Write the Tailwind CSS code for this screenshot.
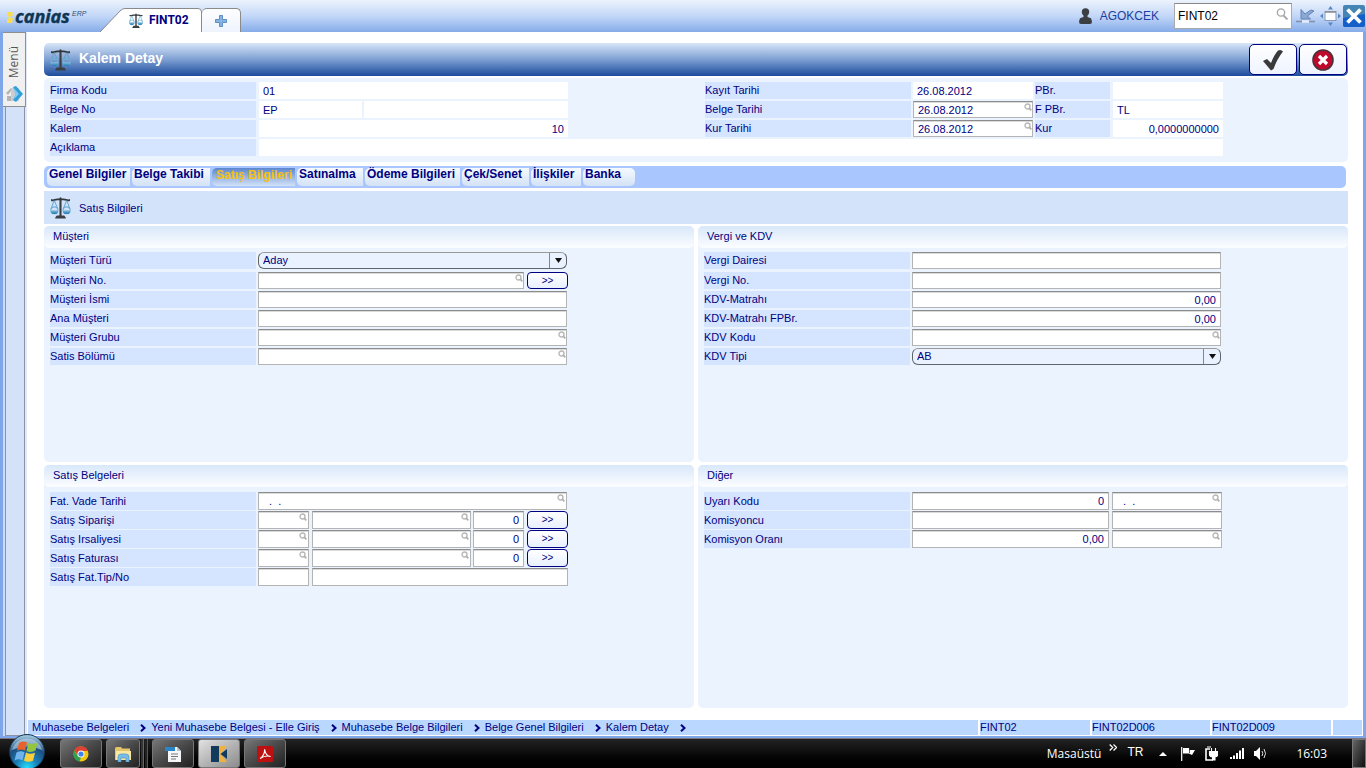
<!DOCTYPE html>
<html lang="tr">
<head>
<meta charset="utf-8">
<title>FINT02 - Kalem Detay</title>
<script src="https://cdn.jsdelivr.net/npm/@tailwindcss/browser@4"></script>
</head>
<body class="flex min-h-screen flex-col bg-[#7fa6e8] font-['Liberation_Sans',Arial,sans-serif] text-[11px] leading-4 text-[#000080]">

<svg class="absolute size-0" aria-hidden="true">
  <defs>
    <linearGradient id="pan" x1="0" y1="0" x2="0" y2="1"><stop offset="0" stop-color="#8fc4e4"/><stop offset="1" stop-color="#1c78ae"/></linearGradient>
    <radialGradient id="orbBg" cx=".5" cy=".95" r=".9"><stop offset="0" stop-color="#25e0ff"/><stop offset=".35" stop-color="#1b7fb8"/><stop offset=".7" stop-color="#1d4f80"/><stop offset="1" stop-color="#9cc3dc"/></radialGradient>
    <symbol id="scales" viewBox="0 0 20 21">
      <path d="M9 1.500a1.200 1.200 0 0 1 2 0V18h2.500l1.500 2v1H5v-1l1.500-2H9z" fill="#3a3f44"/>
      <path d="M1 2.500c2 1 3.500-.5 6-.5h6c2.500 0 4 1.500 6 .5v1.800c-2 .8-4-.6-6-.6H7c-2 0-4 1.400-6 .6z" fill="#33383c"/>
      <path d="M3.800 4 1 12M4.200 4 7.500 12M15.800 4 12.500 12M16.200 4 19 12" stroke="#5aa2cc" stroke-width=".9" fill="none"/>
      <circle cx="4.200" cy="13.200" r="3.300" fill="none" stroke="#6fb0d6" stroke-width="1"/>
      <circle cx="15.800" cy="13.200" r="3.300" fill="none" stroke="#6fb0d6" stroke-width="1"/>
      <path d="M.5 13h7.400a3.700 3.700 0 0 1-7.400 0zM12.100 13h7.400a3.700 3.700 0 0 1-7.400 0z" fill="url(#pan)"/>
    </symbol>
    <symbol id="mag" viewBox="0 0 8 8">
      <circle cx="3.500" cy="3.500" r="2.500" fill="none" stroke="#b8b8b8" stroke-width="1.400"/>
      <path d="M5.200 5.200 7.300 7.300" stroke="#b0b0b0" stroke-width="1.800"/>
    </symbol>
    <symbol id="crumb" viewBox="0 0 6 8"><path d="M1 .8 4.500 4 1 7.200" fill="none" stroke="#000080" stroke-width="2"/></symbol>
  </defs>
</svg>

<header class="flex h-8 items-start justify-between bg-linear-to-b from-[#edf3fd] via-[#c3d7f8] to-[#86ace9]">
  <div class="flex items-end">
    <a href="#" aria-label="canias ERP" class="flex h-8 w-[100px] items-center pl-[7px]">
      <svg viewBox="0 0 80 22" class="h-[22px] w-20">
        <path d="M0 7h5.500v4H3.500v2H6L5 18H0v-4h1.500v-3H0z" fill="#fcdc4a"/>
        <text x="8" y="18" font-family="Open Sans, sans-serif" font-size="18" font-weight="700" font-style="italic" fill="#0f3552" stroke="#0f3552" stroke-width=".4">canias</text>
        <text x="65" y="11" font-family="Liberation Sans, sans-serif" font-size="7" font-style="italic" fill="#2f4f70">ERP</text>
      </svg>
    </a>
    <nav class="flex h-8 items-end">
      <a href="#" class="relative flex h-6 w-[102px] items-center gap-[5px] pl-7 font-['Roboto',sans-serif] text-[12px] font-bold">
        <svg class="absolute inset-0 h-6 w-[102px]" viewBox="0 0 102 24"><path d="M0 24 20 3Q22.500.5 25 .5H98Q101.500.5 101.500 4V24" fill="#fff" stroke="#8a8a8a"/></svg>
        <svg class="relative h-[15px] w-4"><use href="#scales"/></svg>
        <span class="relative">FINT02</span>
      </a>
      <button aria-label="Yeni sekme" class="flex h-6 w-[39px] items-center justify-center rounded-t-[5px] border border-b-0 border-l-0 border-[#8a8a8a] bg-linear-to-b from-[#fdfeff] to-[#eef4fe]">
        <svg class="size-3" viewBox="0 0 12 12"><path d="M4.500.5h3v4h4v3h-4v4h-3v-4h-4v-3h4z" fill="#86b3e0" stroke="#5b8fc6"/></svg>
      </button>
    </nav>
  </div>
  <div class="flex items-center pt-[3px] pr-px text-[12px]">
    <svg class="mr-2 h-4 w-[13px]" viewBox="0 0 13 16"><circle cx="6.500" cy="4" r="3.700" fill="#3b3f44"/><path d="M4.500 6h4v3l3.500 1.200 1 3.300q0 2.500-2 2.500H2q-2 0-2-2.500l1-3.300L4.500 9z" fill="#3b3f44"/></svg>
    <span class="mr-[15px] text-[#1c3fa0]">AGOKCEK</span>
    <span class="relative mr-1 flex">
      <input aria-label="Program" value="FINT02" class="h-[26px] w-[118px] border border-[#aaa] border-t-[#888] bg-white px-[3px] text-black">
      <svg class="absolute top-[5px] right-1 size-3" viewBox="0 0 12 12"><circle cx="5" cy="4.500" r="3.700" fill="none" stroke="#a5a5a5" stroke-width="1.300"/><path d="m7.500 7.500 4 4" stroke="#a5a5a5" stroke-width="1.800"/></svg>
    </span>
    <button aria-label="Küçült" class="mr-1 flex"><svg class="h-5 w-5" viewBox="0 0 20 20"><path d="M0 15.500h19" stroke="#7f93ae" stroke-width="1.600"/><path d="M6 15.500h7" stroke="#e8eef8" stroke-width="2.500"/><path d="M5 3.500V13h9.500l-3-3L18 5l-3-1-6 4z" fill="#8aa8d4" stroke="#6684b4"/></svg></button>
    <button aria-label="Tam ekran" class="mr-[2px] flex"><svg class="h-5 w-[21px]" viewBox="0 0 21 20"><path d="M10.500 0 13 3.500H8zM10.500 20 13 16.500H8zM0 10l3-2.500v5zM21 10l-3-2.500v5z" fill="#5c86c0"/><rect x="5" y="5.500" width="11" height="9" fill="#fafcff" stroke="#8899b4"/><path d="M5 6h11" stroke="#8c8c8c" stroke-width="1.500"/></svg></button>
    <button aria-label="Kapat" class="flex"><svg class="h-[22px] w-[22px]" viewBox="0 0 22 22"><rect width="22" height="22" rx="2" fill="#4585b4"/><path d="M0 13 22 9v11q0 2-2 2H2q-2 0-2-2z" fill="#1460c8"/><path d="m4.500 4.500 13 13M17.500 4.500l-13 13" stroke="#fff" stroke-width="3.800"/></svg></button>
  </div>
</header>

<div class="mr-[3px] mb-0.5 ml-[3px] flex flex-1 bg-white">
  <aside class="flex w-[24px] flex-col border-r-2 border-[#dfe9fa] bg-[#c9dcf8]">
    <button class="flex h-[75px] w-[23px] flex-col items-center justify-between border border-l-0 border-[#8f8f8f] bg-[#f0f0f0] pt-[13px] pb-1 font-['Open_Sans',sans-serif] text-[12px] text-[#555]">
      <span class="rotate-180 [writing-mode:vertical-rl]">Menü</span>
      <svg class="h-4 w-[17px]" viewBox="0 0 17 16"><path d="M0 7 5 2v3L2 9zM1 10h4v5H1z" fill="#b4b4b4"/><path d="M5 2h8v13H5z" fill="#c9ced3"/><path d="m7 1 3-1 7 8-7 8-3-2 3-6z" fill="#2f9fdc"/><path d="m7 1 3 7-3 6 6-6z" fill="#82cdf3"/></svg>
    </button>
    <div class="ml-0.5 w-5 flex-1 border border-t-0 border-[#8b93a5] bg-[#d3e2f9]"></div>
  </aside>

  <div class="flex min-w-0 flex-1 flex-col">
    <main class="ml-[17px] mr-[15px] flex flex-1 flex-col pt-[11px] [&_label]:h-[17px] [&_label]:w-[206px] [&_label]:shrink-0 [&_label]:bg-[#d5e5ff] [&_input]:h-[17px] [&_input]:w-full [&_input]:min-w-0 [&_input]:bg-white [&_input]:px-1">

      <div class="flex h-[33px] items-center rounded-[5px] bg-linear-to-b from-[#d8e6f8] via-[#7d9fd2] to-[#1c4c9c] pr-px pl-1.5">
        <svg class="h-[23px] w-[21px]"><use href="#scales"/></svg>
        <h1 class="ml-2 flex-1 pb-1 text-[14px] font-bold text-white">Kalem Detay</h1>
        <div class="flex gap-0.5">
          <button aria-label="Onayla" class="flex h-[31px] w-12 items-center justify-center rounded-[5px] border border-[#000080] bg-linear-to-b from-white to-[#edf3ff]"><svg class="h-[22px] w-[22px]" viewBox="0 0 22 22"><path d="M1 12 5 10l4 4Q12 6 16 1.500q3-1.500 5 1Q15 10 11.500 20L9 21.500z" fill="#3a3a3a"/></svg></button>
          <button aria-label="Vazgeç" class="flex h-[31px] w-12 items-center justify-center rounded-[5px] border border-[#000080] bg-linear-to-b from-white to-[#edf3ff]"><svg class="h-[22px] w-[22px]" viewBox="0 0 22 22"><circle cx="11" cy="11" r="10" fill="#c00a2c" stroke="#4a3038" stroke-width="1.600"/><path d="m7 7 8 8M15 7l-8 8" stroke="#fff" stroke-width="3.200"/></svg></button>
        </div>
      </div>

      <section class="mt-0.5 flex flex-col gap-0.5 rounded-[5px] bg-[#ebf3ff] px-1.5 pt-1 pb-1.5">
        <div class="flex">
          <div class="flex w-[655px] flex-col gap-0.5">
            <div class="flex"><label for="firma">Firma Kodu</label><div class="ml-[3px] flex w-[309px]"><input id="firma" value="01" readonly></div></div>
            <div class="flex"><label for="belge">Belge No</label><div class="ml-[3px] flex w-[309px] gap-0.5"><div class="w-[103px]"><input id="belge" value="EP" readonly></div><div class="flex flex-1"><input aria-label="Belge numarası" readonly></div></div></div>
            <div class="flex"><label for="kalem">Kalem</label><div class="ml-[3px] flex w-[309px]"><input id="kalem" value="10" readonly class="text-right"></div></div>
          </div>
          <div class="grid grid-cols-[206px_120px_75px_111px] gap-0.5">
            <label for="kayit">Kayıt Tarihi</label><input id="kayit" value="26.08.2012" readonly>
            <label for="pbr" class="max-w-[75px]">PBr.</label><div class="ml-px"><input id="pbr" readonly></div>
            <label for="btarih">Belge Tarihi</label>
            <span class="relative flex"><input id="btarih" value="26.08.2012" class="border border-[#b4b4b4] border-t-[#8c8c8c] inset-shadow-[0_1px_#dadada]"><svg class="absolute top-0.5 right-px size-2"><use href="#mag"/></svg></span>
            <label for="fpbr" class="max-w-[75px]">F PBr.</label><div class="ml-px"><input id="fpbr" value="TL" readonly></div>
            <label for="ktarih">Kur Tarihi</label>
            <span class="relative flex"><input id="ktarih" value="26.08.2012" class="border border-[#b4b4b4] border-t-[#8c8c8c] inset-shadow-[0_1px_#dadada]"><svg class="absolute top-0.5 right-px size-2"><use href="#mag"/></svg></span>
            <label for="kur" class="max-w-[75px]">Kur</label><div class="ml-px"><input id="kur" value="0,0000000000" readonly class="text-right"></div>
          </div>
        </div>
        <div class="flex"><label for="acik">Açıklama</label><div class="ml-[3px] flex w-[964px]"><input id="acik" readonly></div></div>
      </section>

      <div role="tablist" class="mt-1 mr-0.5 flex h-[22px] gap-0.5 rounded-[5px] bg-[#aac6ff] px-[3px] py-0.5 text-[12px] font-bold leading-3 whitespace-nowrap [&>button]:flex [&>button]:h-[18px] [&>button]:rounded-l-[5px] [&>button]:pl-0.5">
        <button role="tab" class="w-[83px] bg-linear-to-b from-[#f6faff] to-[#d3e2f6]">Genel Bilgiler</button>
        <button role="tab" class="w-[78px] bg-linear-to-b from-[#f6faff] to-[#d3e2f6]">Belge Takibi</button>
        <button role="tab" aria-selected="true" class="w-[83px] bg-linear-to-b from-[#5c86ce] to-[#d3e2f6] pt-px text-[#f5bf0c]"><span class="pl-0.5">Satış Bilgileri</span></button>
        <button role="tab" class="w-[66px] bg-linear-to-b from-[#f6faff] to-[#d3e2f6]">Satınalma</button>
        <button role="tab" class="w-[95px] bg-linear-to-b from-[#f6faff] to-[#d3e2f6]">Ödeme Bilgileri</button>
        <button role="tab" class="w-[67px] bg-linear-to-b from-[#f6faff] to-[#d3e2f6]">Çek/Senet</button>
        <button role="tab" class="w-[50px] bg-linear-to-b from-[#f6faff] to-[#d3e2f6]">İlişkiler</button>
        <button role="tab" class="w-[52px] rounded-r-[5px] bg-linear-to-b from-[#f6faff] to-[#d3e2f6]">Banka</button>
      </div>

      <div class="mt-[3px] flex h-[33px] items-center gap-2 bg-[#d3e3f9] pl-1.5">
        <svg class="h-[23px] w-[21px]"><use href="#scales"/></svg>
        <h2>Satış Bilgileri</h2>
      </div>

      <div class="mt-0.5 grid flex-1 grid-cols-2 grid-rows-[236fr_243fr] gap-x-1 gap-y-[3px] [&_h3]:h-[22px] [&_h3]:rounded-[5px] [&_h3]:bg-linear-to-b [&_h3]:from-[#d8e8fa] [&_h3]:to-[#fcfdff] [&_h3]:pl-[9px] [&_h3]:pt-0.5 [&_input]:border [&_input]:border-[#b4b4b4] [&_input]:border-t-[#8c8c8c] [&_input]:inset-shadow-[0_1px_#dadada] [&_select]:h-[17px] [&_select]:w-full [&_select]:appearance-none [&_select]:rounded-[6px] [&_select]:border [&_select]:border-[#60646c] [&_select]:border-t-[#999] [&_select]:bg-[#ebf2ff] [&_select]:px-1 [&_select]:leading-[15px]">

        <section class="rounded-[5px] bg-[#ebf3ff]">
          <h3>Müşteri</h3>
          <div class="flex flex-col gap-0.5 px-1.5 pt-1 [&>div]:flex [&>div]:gap-0.5">
            <div class="mb-px"><label for="mtur">Müşteri Türü</label><div class="relative flex w-[309px]"><select id="mtur"><option>Aday</option></select><svg class="pointer-events-none absolute top-0 right-0 h-[17px] w-[18px]" viewBox="0 0 18 17"><path d="M.5 1v15" stroke="#7e8796"/><path d="M6 6h7l-3.500 5z" fill="#111"/></svg></div></div>
            <div><label for="mno">Müşteri No.</label><span class="relative flex w-[266px]"><input id="mno"><svg class="absolute top-0.5 right-px size-2"><use href="#mag"/></svg></span><button class="ml-px h-[17px] w-[41px] rounded-[4px] border border-[#000080] bg-linear-to-b from-white to-[#e8f0ff] text-[10px] leading-3">&gt;&gt;</button></div>
            <div><label for="mismi">Müşteri İsmi</label><span class="flex w-[309px]"><input id="mismi"></span></div>
            <div><label for="ana">Ana Müşteri</label><span class="flex w-[309px]"><input id="ana"></span></div>
            <div><label for="grup">Müşteri Grubu</label><span class="relative flex w-[309px]"><input id="grup"><svg class="absolute top-0.5 right-px size-2"><use href="#mag"/></svg></span></div>
            <div><label for="bolum">Satis Bölümü</label><span class="relative flex w-[309px]"><input id="bolum"><svg class="absolute top-0.5 right-px size-2"><use href="#mag"/></svg></span></div>
          </div>
        </section>

        <section class="rounded-[5px] bg-[#ebf3ff]">
          <h3>Vergi ve KDV</h3>
          <div class="flex flex-col gap-0.5 px-1.5 pt-1 [&>div]:flex [&>div]:gap-0.5">
            <div class="mb-px"><label for="vd">Vergi Dairesi</label><span class="flex w-[309px]"><input id="vd"></span></div>
            <div><label for="vn">Vergi No.</label><span class="flex w-[309px]"><input id="vn"></span></div>
            <div><label for="km">KDV-Matrahı</label><span class="flex w-[309px]"><input id="km" value="0,00" class="text-right"></span></div>
            <div><label for="kmf">KDV-Matrahı FPBr.</label><span class="flex w-[309px]"><input id="kmf" value="0,00" class="text-right"></span></div>
            <div><label for="kk">KDV Kodu</label><span class="relative flex w-[309px]"><input id="kk"><svg class="absolute top-0.5 right-px size-2"><use href="#mag"/></svg></span></div>
            <div><label for="kt">KDV Tipi</label><div class="relative flex w-[309px]"><select id="kt"><option>AB</option></select><svg class="pointer-events-none absolute top-0 right-0 h-[17px] w-[18px]" viewBox="0 0 18 17"><path d="M.5 1v15" stroke="#7e8796"/><path d="M6 6h7l-3.500 5z" fill="#111"/></svg></div></div>
          </div>
        </section>

        <section class="rounded-[5px] bg-[#ebf3ff]">
          <h3>Satış Belgeleri</h3>
          <div class="flex flex-col gap-px px-1.5 pt-[5px] [&>div]:flex [&>div]:gap-0.5 [&_label]:h-[18px] [&_label]:pt-px [&_input]:h-[18px]">
            <div><label for="vade">Fat. Vade Tarihi</label><span class="relative flex w-[309px]"><input id="vade" value="&nbsp; .&nbsp; ."><svg class="absolute top-0.5 right-0.5 size-2"><use href="#mag"/></svg></span></div>
            <div><label for="sip">Satış Siparişi</label><span class="relative flex w-[51px]"><input id="sip"><svg class="absolute top-0.5 right-0.5 size-2"><use href="#mag"/></svg></span><span class="relative ml-px flex w-[159px]"><input aria-label="Sipariş no"><svg class="absolute top-0.5 right-0.5 size-2"><use href="#mag"/></svg></span><span class="flex w-[51px]"><input aria-label="Sipariş kalemi" value="0" class="text-right"></span><button class="ml-px h-[18px] w-[41px] rounded-[4px] border border-[#000080] bg-linear-to-b from-white to-[#e8f0ff] text-[10px] leading-3">&gt;&gt;</button></div>
            <div><label for="irs">Satış Irsaliyesi</label><span class="relative flex w-[51px]"><input id="irs"><svg class="absolute top-0.5 right-0.5 size-2"><use href="#mag"/></svg></span><span class="relative ml-px flex w-[159px]"><input aria-label="İrsaliye no"><svg class="absolute top-0.5 right-0.5 size-2"><use href="#mag"/></svg></span><span class="flex w-[51px]"><input aria-label="İrsaliye kalemi" value="0" class="text-right"></span><button class="ml-px h-[18px] w-[41px] rounded-[4px] border border-[#000080] bg-linear-to-b from-white to-[#e8f0ff] text-[10px] leading-3">&gt;&gt;</button></div>
            <div><label for="fat">Satış Faturası</label><span class="relative flex w-[51px]"><input id="fat"><svg class="absolute top-0.5 right-0.5 size-2"><use href="#mag"/></svg></span><span class="relative ml-px flex w-[159px]"><input aria-label="Fatura no"><svg class="absolute top-0.5 right-0.5 size-2"><use href="#mag"/></svg></span><span class="flex w-[51px]"><input aria-label="Fatura kalemi" value="0" class="text-right"></span><button class="ml-px h-[18px] w-[41px] rounded-[4px] border border-[#000080] bg-linear-to-b from-white to-[#e8f0ff] text-[10px] leading-3">&gt;&gt;</button></div>
            <div><label for="tip">Satış Fat.Tip/No</label><span class="flex w-[51px]"><input id="tip"></span><span class="ml-px flex w-[256px]"><input aria-label="Fatura tip no"></span></div>
          </div>
        </section>

        <section class="rounded-[5px] bg-[#ebf3ff]">
          <h3>Diğer</h3>
          <div class="flex flex-col gap-px px-1.5 pt-[5px] [&>div]:flex [&>div]:gap-0.5 [&_label]:h-[18px] [&_label]:pt-px [&_input]:h-[18px]">
            <div><label for="uk">Uyarı Kodu</label><span class="flex w-[197px]"><input id="uk" value="0" class="text-right"></span><span class="relative ml-px flex w-[110px]"><input aria-label="Uyarı tarihi" value="&nbsp; .&nbsp; ."><svg class="absolute top-0.5 right-0.5 size-2"><use href="#mag"/></svg></span></div>
            <div><label for="kom">Komisyoncu</label><span class="flex w-[197px]"><input id="kom"></span><span class="ml-px flex w-[110px]"><input aria-label="Komisyoncu kodu"></span></div>
            <div><label for="ko">Komisyon Oranı</label><span class="flex w-[197px]"><input id="ko" value="0,00" class="text-right"></span><span class="relative ml-px flex w-[110px]"><input aria-label="Komisyon birimi"><svg class="absolute top-0.5 right-0.5 size-2"><use href="#mag"/></svg></span></div>
          </div>
        </section>
      </div>
    </main>

    <footer class="mt-3 mb-px ml-px mr-px flex h-[15px] gap-0.5 leading-[15px]">
      <nav class="flex flex-1 items-center gap-[11px] bg-[#bad7ff] pl-1 [&>svg]:-mr-1.5 [&>svg]:h-2 [&>svg]:w-1.5">
        <a href="#">Muhasebe Belgeleri</a><svg><use href="#crumb"/></svg>
        <a href="#">Yeni Muhasebe Belgesi - Elle Giriş</a><svg><use href="#crumb"/></svg>
        <a href="#">Muhasebe Belge Bilgileri</a><svg><use href="#crumb"/></svg>
        <a href="#">Belge Genel Bilgileri</a><svg><use href="#crumb"/></svg>
        <a href="#">Kalem Detay</a><svg><use href="#crumb"/></svg>
      </nav>
      <span class="w-[110px] bg-[#bad7ff]">FINT02</span>
      <span class="w-[118px] bg-[#bad7ff]">FINT02D006</span>
      <span class="w-[119px] bg-[#bad7ff]">FINT02D009</span>
      <span class="w-[29px] bg-[#bad7ff]"></span>
    </footer>
  </div>
</div>

<div class="flex h-[30px] justify-between border-t border-[#77747f] bg-linear-to-b from-[#222] via-[#0c0c0c] to-black font-['Open_Sans',sans-serif] text-[12px] text-white">
  <div class="flex items-start pl-2">
    <button aria-label="Başlat" class="z-10 -mt-[5px] h-[34px] w-[38px]">
      <svg class="h-[36px] w-[38px]" viewBox="0 0 38 36">
        <circle cx="19" cy="18" r="17.500" fill="url(#orbBg)" stroke="#17344f"/>
        <path d="M4 16A15.500 15.500 0 0 1 34 16Q19 9 4 16z" fill="#c9e0ef" opacity=".55"/>
        <path d="M11 9q4-2.500 8-.5l-2 8q-4-2-8 .2z" fill="#e8622c"/><path d="M20.500 9q4 2 9-.5l-2 8q-4.500 2.500-9 .5z" fill="#94c53c"/>
        <path d="M8.500 18.500q4-2.500 8-.3l-2 8q-4-2.200-8 .3z" fill="#6fb4ee"/><path d="M18 18.500q4 2.500 9 .2l-2 8q-5 2.300-9-.2z" fill="#fbcf3c"/>
      </svg>
    </button>
    <div class="ml-3.5 flex gap-1 [&>button]:flex [&>button]:h-[29px] [&>button]:items-center [&>button]:justify-center [&>button]:rounded-[3px] [&>button]:border [&>button]:border-[#777]">
      <button aria-label="Chrome" class="w-[42px] bg-linear-to-br from-[#777] via-[#484848] to-[#222]"><svg class="size-4" viewBox="0 0 16 16"><circle cx="8" cy="8" r="7.500" fill="#f3c70e"/><path d="M1.200 4.500A7.500 7.500 0 0 1 14.900 5H8L4.500 9z" fill="#dd4334"/><path d="M1.200 4.500 4.700 10 8 11.500 6.500 15.400A7.500 7.500 0 0 1 1.200 4.500z" fill="#2ea04f"/><circle cx="8" cy="8" r="3.500" fill="#fff"/><circle cx="8" cy="8" r="2.600" fill="#3f83ec"/></svg></button>
      <div class="flex w-[42px] gap-px [&>button]:flex [&>button]:h-[29px] [&>button]:items-center [&>button]:justify-center [&>button]:rounded-[3px] [&>button]:border [&>button]:border-[#777]">
        <button aria-label="Dosya gezgini" class="w-[35px] bg-linear-to-br from-[#777] via-[#484848] to-[#222]"><svg class="h-4 w-[18px]" viewBox="0 0 18 16"><path d="M1 2.500Q1 1 2.500 1H7l1 1.500h8V14H1z" fill="#e5c566"/><path d="M2 5h15v9H2z" fill="#f9e7a3"/><path d="M4 16v-5q0-3 3-3h5q3 0 3 3v5h-3v-4H7v4z" fill="#79bde6" stroke="#4c96c4" stroke-width=".7"/></svg></button>
        <span class="h-[29px] w-[3px] border-r border-[#666] bg-[#333]"></span><span class="h-[29px] w-[3px] border-r border-[#555] bg-[#222]"></span>
      </div>
      <button aria-label="Belge" class="w-[42px] bg-linear-to-br from-[#777] via-[#484848] to-[#222]"><svg class="h-4 w-4" viewBox="0 0 16 16"><path d="M3 1h9l4 4v11H3z" fill="#f4f7f9"/><path d="M12 1v4h4z" fill="#b6c3cd"/><path d="M0 1h10v4H0z" fill="#2785c8"/><path d="M6 8h7M6 10.500h7M6 13h5" stroke="#777"/></svg></button>
      <button aria-label="canias" class="w-[42px] bg-linear-to-br from-[#e2e2e2] via-[#b5b5b5] to-[#8c8c8c]"><svg class="h-4 w-4" viewBox="0 0 16 16"><path d="M0 0h8v16H0z" fill="#123a5c"/><path d="M8 0h8L9.500 8 16 16H8z" fill="#efb13f"/><path d="M16 3v10l-6.500-5z" fill="#123a5c"/></svg></button>
      <button aria-label="PDF" class="w-[42px] bg-linear-to-br from-[#777] via-[#484848] to-[#222]"><svg class="h-4 w-4" viewBox="0 0 16 16"><rect width="16" height="16" rx="1.500" fill="#bd1010"/><path d="M3 12.500c3-1.500 5-6 4.600-9.300.5 4 3 7 6 7.300-3-1-7-.3-10.600 2z" fill="none" stroke="#fff" stroke-width="1.200"/></svg></button>
    </div>
  </div>
  <div class="flex items-center">
    <span>Masaüstü</span>
    <svg class="mb-3 ml-2 h-[7px] w-2" viewBox="0 0 8 7"><path d="m.7.500 3 3-3 3M4.500.5l3 3-3 3" fill="none" stroke="#fff" stroke-width="1.300"/></svg>
    <span class="mr-4 mb-1 ml-2.5 font-['Liberation_Sans',sans-serif]">TR</span>
    <svg class="mr-3.5 h-1 w-2" viewBox="0 0 8 4"><path d="m4 0 4 4H0z" fill="#fff"/></svg>
    <svg class="mr-2.5 h-[15px] w-[14px]" viewBox="0 0 14 15"><path d="M.7 1v14" stroke="#fff" stroke-width="1.200"/><path d="M2 2h6v2h6l-3 5-3-1.500H2z" fill="#fff"/><path d="M8.500 2v5" stroke="#333" stroke-width=".8"/></svg>
    <svg class="mr-3 h-[15px] w-[13px]" viewBox="0 0 13 15"><path d="M5 3H1v11h7" fill="none" stroke="#fff" stroke-width="1.600"/><path d="M2 1h4M6.500 2v3M10.500 2v3M4.500 5.500H13V9q-1 2-3 2v3H7.500v-3Q5 11 4.500 9z" fill="#fff" stroke="#fff" stroke-width="1.100"/></svg>
    <svg class="mr-2.5 h-[11px] w-[14px]" viewBox="0 0 14 11"><path d="M0 9h2v2H0zM3 7.500h2V11H3zM6 5h2v6H6zM9 2.500h2V11H9zM12 0h2v11h-2z" fill="#fff"/></svg>
    <svg class="mr-7 h-[13px] w-[14px]" viewBox="0 0 14 13"><path d="M0 4h2l4-4v13L2 9H0z" fill="#fff"/><path d="M8 4q1.500 2.500 0 5M10 2q3 4.500 0 9" fill="none" stroke="#ddd"/></svg>
    <time>16:03</time>
    <button aria-label="Masaüstünü göster" class="ml-[25px] h-full w-[14px] border border-[#777] bg-linear-to-br from-[#666] to-[#111]"></button>
  </div>
</div>
</body>
</html>
